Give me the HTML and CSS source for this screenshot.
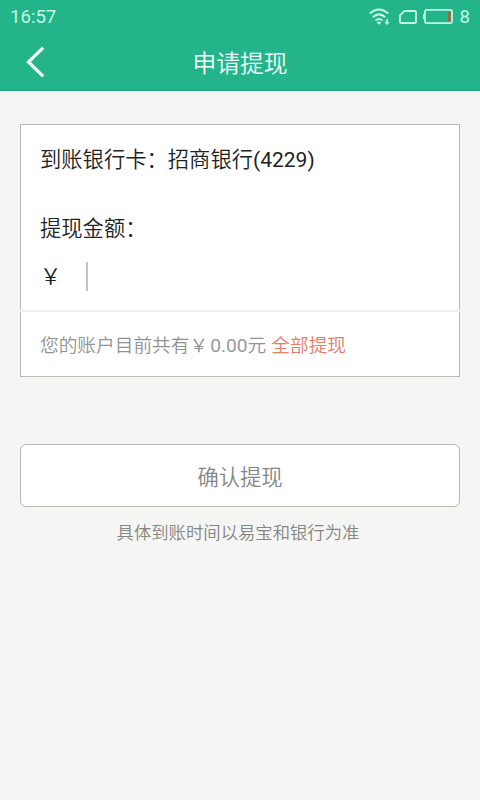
FILE: index.html
```html
<!DOCTYPE html>
<html lang="zh-CN">
<head>
<meta charset="utf-8">
<meta name="viewport" content="width=device-width">
<title>申请提现</title>
<link rel="stylesheet" href="styles.css">
</head>
<body>
<header class="top">
  <div class="status">
    <span class="time">16:57</span>
    <div class="indicators">
      <svg class="wifi" width="22" height="18" viewBox="0 0 22 18" fill="none" stroke="currentColor" stroke-width="2">
        <path d="M0.7 5.5Q10 -2.5 19.3 5.5M3.7 9.2Q10 3.6 16.3 9.2M6.5 12.5Q10 9.5 13.5 12.5"/>
        <path d="M7.8 14.4Q10 12.7 12.2 14.4L10 16.8Z" fill="currentColor" stroke="none"/>
        <path d="M18 11v4.5M16.2 14l1.8 2 1.8-2" stroke-width="1.5"/>
      </svg>
      <svg class="sim" width="18" height="14" viewBox="0 0 18 14" fill="none" stroke="currentColor" stroke-width="1.8">
        <path d="M5.4 1H16Q17 1 17 2V12Q17 13 16 13H2Q1 13 1 12V5.4Z"/>
      </svg>
      <svg class="battery" width="30" height="15" viewBox="0 0 30 15" fill="none" stroke="currentColor" stroke-width="1.7">
        <rect x="2" y="0.9" width="27" height="13.2" rx="1.5"/>
        <path d="M0.8 5V10"/>
        <path d="M26.2 3V12" stroke="#a65f3c" stroke-width="2.6"/>
      </svg>
      <span class="level">8</span>
    </div>
  </div>
  <div class="nav">
    <svg class="back" width="20" height="32" viewBox="0 0 20 32" fill="none" stroke="currentColor" stroke-width="3.2">
      <path d="M17.2 1.7L2.5 16L17.2 30.3"/>
    </svg>
    <h1 class="title">申请提现</h1>
  </div>
</header>
<main class="content">
  <section class="card">
    <div class="form">
      <p class="row">到账银行卡：招商银行<span class="digits">(4229)</span></p>
      <p class="row amount-label">提现金额：</p>
      <div class="amount"><span class="yen">￥</span><span class="caret"></span></div>
    </div>
    <div class="balance">
      <span>您的账户目前共有￥</span><span class="sum">0.00</span><span>元</span><a class="all">全部提现</a>
    </div>
  </section>
  <button class="confirm">确认提现</button>
  <p class="note">具体到账时间以易宝和银行为准</p>
</main>
</body>
</html>
```
FILE: styles.css
```css
* { box-sizing: border-box; }
body {
  margin: 0;
  height: 800px;
  overflow: hidden;
  background: #f5f5f3;
  color: #222;
  font-family: Roboto, "Noto Sans CJK SC DemiLight", "Noto Sans CJK SC", sans-serif;
  font-weight: 350;
}
h1, p { margin: 0; font-weight: 350; }
.top {
  height: 91px;
  background: #24b48a;
  border-bottom: 1px solid #20a67e;
  color: #f2fffb;
}
.status {
  height: 33px;
  padding: 0 10px;
  display: flex;
  justify-content: space-between;
  align-items: center;
  font-size: 18.6px;
  font-weight: 400;
  color: #c0f8e4;
}
.indicators { display: flex; align-items: center; }
.wifi { margin-right: 8px; }
.sim { margin-right: 6px; }
.battery { margin-right: 7px; }
.nav {
  height: 57px;
  display: grid;
  grid-template-columns: 80px 1fr 80px;
  align-items: center;
}
.back { margin-left: 26px; }
.title { padding-top: 4px; text-align: center; font-size: 23.8px; line-height: 36px; }
.content { padding: 33px 20px 0; }
.card {
  height: 253px;
  background: #fff;
  border: 1px solid #b8b8b4;
}
.form {
  height: 187px;
  margin: 0 -1px;
  padding: 19px 20px 0;
  border-bottom: 2px solid #f0f0ee;
}
.row { font-size: 21.3px; line-height: 32px; white-space: nowrap; }
.digits { font-size: 21px; font-weight: 400; }
.amount-label { margin-top: 37px; }
.amount { height: 34px; margin-top: 14px; display: flex; align-items: center; }
.yen {
  width: 46px;
  padding-top: 2px;
  font-size: 21.3px;
  line-height: 34px;
  font-weight: 400;
}
.caret { width: 2px; height: 29px; background: #c4c4c4; }
.balance {
  height: 64px;
  padding: 2px 0 0 19px;
  display: flex;
  align-items: baseline;
  font-size: 18.7px;
  line-height: 64px;
  color: #929292;
}
.sum { margin-left: 2px; font-size: 19.2px; font-weight: 400; color: #999; }
.all { margin-left: 5px; color: #e67c6a; }
.confirm {
  display: block;
  width: 100%;
  height: 63px;
  margin-top: 67px;
  padding: 0;
  background: #fff;
  border: 1px solid #b8b8b4;
  border-radius: 6px;
  font-family: inherit;
  font-weight: 350;
  font-size: 21.3px;
  color: #858585;
}
.note { margin: 13px 4px 0 0; text-align: center; font-size: 17.35px; line-height: 26px; color: #858583; }
```
